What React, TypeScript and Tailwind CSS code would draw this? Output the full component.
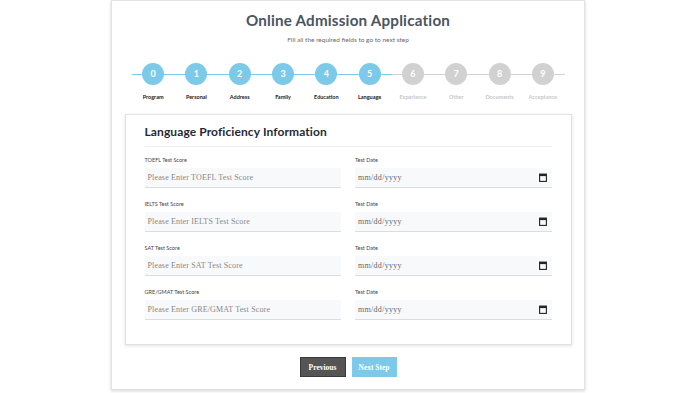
import React from "react";

const steps = ["Program","Personal","Address","Family","Education","Language","Experience","Other","Documents","Acceptance"];
const rows = ["TOEFL","IELTS","SAT","GRE/GMAT"];

export default function App() {
  return (
    <div className="w-[700px] h-[393px] bg-white overflow-hidden" style={{ fontFamily: "Lato, 'Noto Sans', sans-serif" }}>
      <div className="ml-[111px] w-[474px] h-[390px] bg-white border border-[#e3e3e3] shadow-[0_1px_3px_rgba(0,0,0,0.18)] flex flex-col items-center">
        <h1 className="mt-[10px] text-[15.2px] leading-[18px] font-bold text-[#4a5562] tracking-[0.2px]">Online Admission Application</h1>
        <p className="mt-[7px] text-[6.5px] leading-[8px] text-[#6b6b6b]">Fill all the required fields to go to next step</p>
        <div className="relative mt-[19px] w-[433px] grid grid-cols-10">
          <div className="absolute left-0 top-[11px] w-[260px] h-px bg-[#7cc9e8]" />
          <div className="absolute left-[260px] right-0 top-[11px] h-px bg-[#d2d2d2]" />
          {steps.map((s, i) => (
            <div key={s} className="relative flex flex-col items-center">
              <div className={`w-[22px] h-[22px] rounded-full flex items-center justify-center text-white text-[9px] font-bold ${i <= 5 ? "bg-[#7cc9e8]" : "bg-[#d1d1d1]"}`}>{i}</div>
              <div className={`mt-[8px] text-[5.5px] font-bold ${i <= 5 ? "text-[#222]" : "text-[#c8c8c8]"}`}>{s}</div>
            </div>
          ))}
        </div>
        <div className="mt-[13px] w-[447px] h-[231px] border border-[#e2e2e2] shadow-[0_1px_3px_rgba(0,0,0,0.12)] px-[19px] pt-[9px]">
          <h2 className="text-[12px] leading-[16px] font-bold text-[#1f2a37] tracking-[0.1px]">Language Proficiency Information</h2>
          <div className="mt-[6px] h-px bg-[#eeeeee]" />
          <div className="mt-[9px] grid grid-cols-2 gap-x-[14px] gap-y-[12px]">
            {rows.map((r) => (
              <React.Fragment key={r}>
                <div>
                  <div className="text-[5.5px] leading-[8px] text-[#444]">{r} Test Score</div>
                  <div className="mt-[4px] h-[20px] bg-[#f8f9fb] border-b border-[#dcdcdc] flex items-center px-[3px] text-[8px] text-[#888]" style={{ fontFamily: "'Liberation Serif', serif", letterSpacing: "0.15px" }}>Please Enter {r} Test Score</div>
                </div>
                <div>
                  <div className="text-[5.5px] leading-[8px] text-[#444]">Test Date</div>
                  <div className="mt-[4px] h-[20px] bg-[#f8f9fb] border-b border-[#dcdcdc] flex items-center justify-between pl-[3px] pr-[5px] text-[8px] text-[#666]" style={{ fontFamily: "'Liberation Serif', serif", letterSpacing: "0.3px" }}>
                    <span>mm/dd/yyyy</span>
                    <svg width="8" height="9" viewBox="0 0 8 9"><rect x="0.6" y="1.1" width="6.8" height="7.3" fill="none" stroke="#222" strokeWidth="1.1"/><rect x="0.6" y="1.1" width="6.8" height="2" fill="#222"/></svg>
                  </div>
                </div>
              </React.Fragment>
            ))}
          </div>
        </div>
        <div className="mt-[12px] flex gap-[6px]" style={{ fontFamily: "'Liberation Serif', serif" }}>
          <button className="w-[46px] h-[20px] bg-[#555555] border border-[#3a3a3a] text-white text-[7.5px] font-bold">Previous</button>
          <button className="w-[45px] h-[20px] bg-[#7cc9e8] text-white text-[7.5px] font-bold">Next Step</button>
        </div>
      </div>
    </div>
  );
}
